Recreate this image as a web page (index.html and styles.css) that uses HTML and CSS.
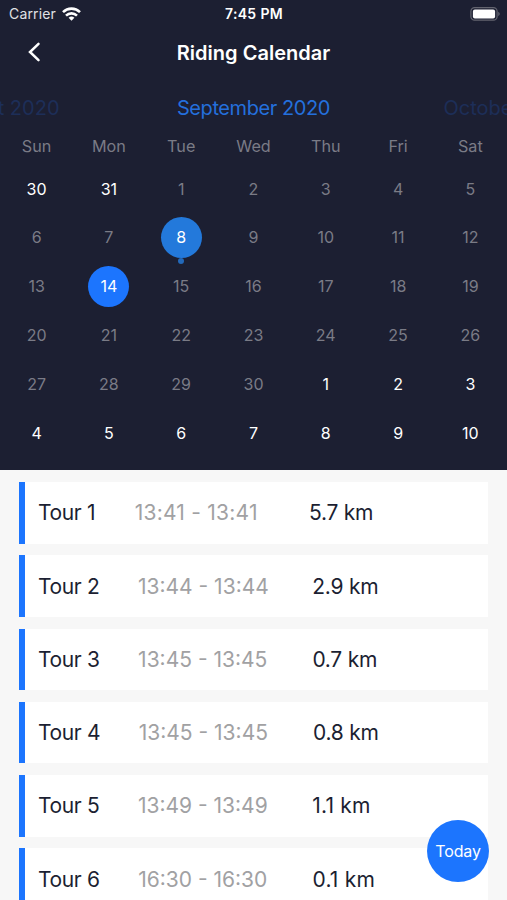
FILE: index.html
```html
<!DOCTYPE html>
<html lang="en"><head><meta charset="utf-8"><title>Riding Calendar</title><link rel="stylesheet" href="styles.css"></head>
<body>
<header class="top">
<div class="status"><span class="carrier">Carrier <svg width="19" height="14" viewBox="0 0 19 14"><g fill="none" stroke="#fff" stroke-width="2.6"><path d="M1 5.1a12.2 12.2 0 0 1 17 0M4 8.6a8 8 0 0 1 11 0"/></g><path fill="#fff" d="M6.6 10.8a4.4 4.4 0 0 1 5.8 0l-2.9 3z"/></svg></span><span class="time">7:45 PM</span><svg class="battery" width="31" height="14" viewBox="0 0 31 14"><rect x=".9" y=".6" width="26.2" height="12.6" rx="3.7" fill="none" stroke="#63646f" stroke-width="1.2"/><rect x="2.9" y="2.4" width="22.2" height="9" rx="2" fill="#fff"/><path d="M28.4 4.7q2.4 2.2 0 4.5z" fill="#73747f"/></svg></div>
<nav class="nav"><svg class="back" width="14" height="20" viewBox="0 0 14 20"><path d="M11.5 1.8 3 10l8.5 8.2" fill="none" stroke="#fff" stroke-width="2.5" stroke-linecap="round"/></svg><h1>Riding Calendar</h1></nav>
<div class="months"><span class="prev">August 2020</span><span class="current">September 2020</span><span class="next">October 2020</span></div>
<div class="week"><span>Sun</span><span>Mon</span><span>Tue</span><span>Wed</span><span>Thu</span><span>Fri</span><span>Sat</span></div>
<div class="days">
<b>30</b><b>31</b><span>1</span><span>2</span><span>3</span><span>4</span><span>5</span>
<span>6</span><span>7</span><b class="mark event">8</b><span>9</span><span>10</span><span>11</span><span>12</span>
<span>13</span><b class="mark selected">14</b><span>15</span><span>16</span><span>17</span><span>18</span><span>19</span>
<span>20</span><span>21</span><span>22</span><span>23</span><span>24</span><span>25</span><span>26</span>
<span>27</span><span>28</span><span>29</span><span>30</span><b>1</b><b>2</b><b>3</b>
<b>4</b><b>5</b><b>6</b><b>7</b><b>8</b><b>9</b><b>10</b>
</div></header>
<main class="tours">
<article><span class="name">Tour 1</span><span class="range wide">13:41 - 13:41</span><span class="distance">5.7 km</span></article>
<article><span class="name">Tour 2</span><span class="range">13:44 - 13:44</span><span class="distance">2.9 km</span></article>
<article><span class="name">Tour 3</span><span class="range">13:45 - 13:45</span><span class="distance">0.7 km</span></article>
<article><span class="name">Tour 4</span><span class="range">13:45 - 13:45</span><span class="distance">0.8 km</span></article>
<article><span class="name">Tour 5</span><span class="range">13:49 - 13:49</span><span class="distance loose">1.1 km</span></article>
<article><span class="name">Tour 6</span><span class="range">16:30 - 16:30</span><span class="distance loose">0.1 km</span></article>
</main><button class="today">Today</button>
</body></html>
```
FILE: styles.css
```css
* { box-sizing: border-box; }
body { margin: 0; height: 900px; overflow: hidden; background: #f7f7f7; font-family: Inter, "Liberation Sans", sans-serif; color: #1c1f32; position: relative; }
.top { height: 470px; background: #1c1f32; color: #fff; overflow: hidden; }
.status { height: 27px; display: grid; grid-template-columns: 1fr auto 1fr; align-items: center; padding: 0 6px 0 9px; font-size: 14px; }
.carrier { display: flex; align-items: center; gap: 6px; letter-spacing: .15px; color: #e0e1e5; }
.time { font-weight: 600; letter-spacing: .35px; margin-left: -2px; }
.battery { justify-self: end; }
.nav { height: 50px; display: grid; grid-template-columns: 60px 1fr 60px; align-items: center; }
.back { justify-self: center; margin-left: 8px; }
h1 { margin: 0; padding-top: 1px; font-size: 20px; font-weight: 600; letter-spacing: .02px; text-align: center; }
.months { height: 60px; padding-top: 1px; display: grid; grid-template-columns: minmax(0, 1fr) 154px minmax(0, 1fr); align-items: center; column-gap: 113px; margin: 0 -65px; color: #246fdc; font-size: 20px; letter-spacing: -.42px; white-space: nowrap; }
.prev, .next { color: #1d2e58; letter-spacing: 0; }
.prev { justify-self: end; margin-right: 4px; }
.current { justify-self: center; }
.week, .days { display: grid; grid-template-columns: repeat(7, 72.3px); justify-content: center; text-align: center; }
.week { height: 27.1px; line-height: 19px; color: #7a7b86; font-size: 16.2px; }
.days { grid-auto-rows: 48.83px; align-items: center; justify-items: center; color: #7a7b86; font-size: 16px; }
b { color: #fff; font-weight: 400; }
.mark { width: 41px; height: 41px; border-radius: 50%; display: grid; place-items: center; position: relative; }
.selected { background: #1c75fe; }
.event { background: #2379db; }
.event::after { content: ""; width: 6px; height: 6px; border-radius: 50%; background: #2369b9; position: absolute; top: 41.5px; left: 17.5px; }
.tours { padding: 12px 19px 0 19px; display: grid; gap: 11.8px; }
article { height: 61.5px; display: flex; align-items: center; background: #fff; border-left: 6px solid #1c75fe; padding-left: 13px; font-size: 21px; white-space: nowrap; }
.name { margin-right: 38.5px; letter-spacing: -.35px; }
.range { color: #a1a1a3; width: 174.3px; }
.wide { letter-spacing: .24px; margin-left: 1px; }
.distance { letter-spacing: -.25px; }
.loose { letter-spacing: .2px; }
.today { position: absolute; left: 427px; top: 820px; width: 62px; height: 62px; border: 0; border-radius: 50%; padding: 0; background: #1c75fe; color: #fff; font: 16px Inter, sans-serif; letter-spacing: -.15px; }
```
